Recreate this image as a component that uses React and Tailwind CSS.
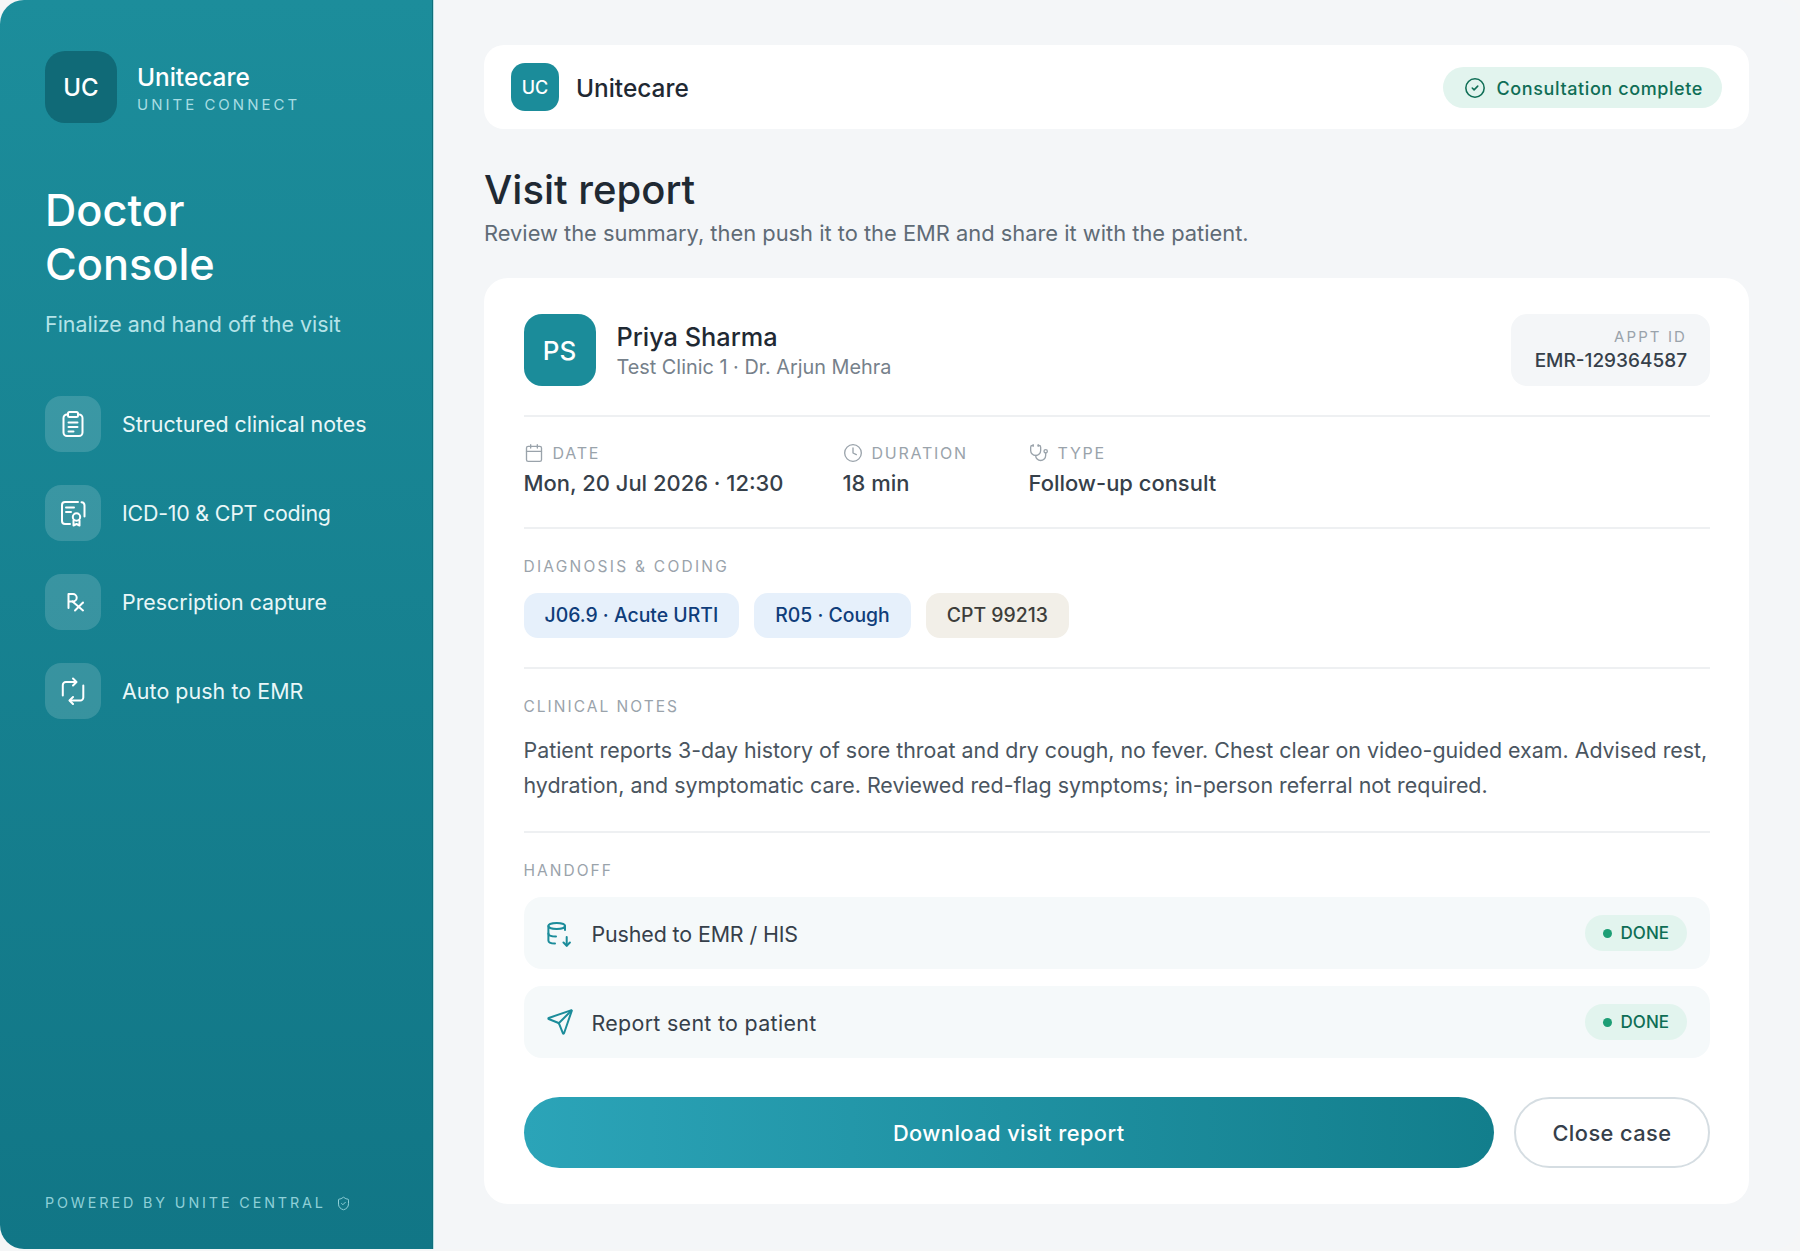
import React from 'react';
import { Calendar, Clock, Stethoscope, CircleCheck, Send, ShieldCheck } from 'lucide-react';

// sidebar icons, drawn on a 28px box to follow the picture
function Svg({ children, size = 28, className = '' }) {
  return (
    <svg width={size} height={size} viewBox="0 0 28 28" fill="none" stroke="currentColor" strokeWidth="2" strokeLinecap="round" strokeLinejoin="round" className={className}>
      {children}
    </svg>
  );
}

function NotesIcon() {
  return (
    <Svg>
      <path d="M9 4.5H8a3.5 3.5 0 0 0-3.5 3.5v14.5A3.5 3.5 0 0 0 8 26h12a3.5 3.5 0 0 0 3.5-3.5V8A3.5 3.5 0 0 0 20 4.5h-1" />
      <rect x="9" y="2" width="10" height="5" rx="1.5" />
      <path d="M9.5 12.5h9" />
      <path d="M9.5 17h9" />
      <path d="M9.5 21.5h5" />
    </Svg>
  );
}

function CodingIcon() {
  return (
    <Svg>
      <path d="M11 25H6a3 3 0 0 1-3-3V6a3 3 0 0 1 3-3h13" />
      <path d="M22.5 3.2a3.2 3.2 0 0 1 3 3.2v11" />
      <path d="M7 8.5h8" />
      <path d="M7 13h5" />
      <circle cx="17.5" cy="18" r="3.7" />
      <path d="M14.5 21.5v5l3-1.5 3 1.5v-5" />
    </Svg>
  );
}

function RxIcon() {
  return (
    <Svg>
      <path d="M9.5 20V6h4.5a3.7 3.7 0 0 1 0 7.4H9.5" />
      <path d="M13.5 13.4l10.5 9" />
      <path d="M24 14.5l-8 8" />
    </Svg>
  );
}

function PushIcon() {
  return (
    <Svg>
      <path d="M3.8 18.5V8a3 3 0 0 1 3-3H17" />
      <path d="M14 1.5L17.5 5 14 8.5" />
      <path d="M24.3 8.5V20.5a3 3 0 0 1-3 3H11" />
      <path d="M14 20l-3.5 3.5L14 27" />
    </Svg>
  );
}

function DbDownIcon({ className = '' }) {
  return (
    <Svg className={className}>
      <ellipse cx="10.7" cy="7" rx="8.3" ry="3" />
      <path d="M2.4 7v14.5c0 1.7 2.6 3 6.6 3" />
      <path d="M2.4 14.5c0 1.7 2.6 3 7.6 3" />
      <path d="M19 7v4" />
      <path d="M20.7 18v8.5" />
      <path d="M17.5 23.5l3.2 3.2 3.2-3.2" />
    </Svg>
  );
}

const features = [
  { icon: NotesIcon, label: 'Structured clinical notes', cls: '' },
  { icon: CodingIcon, label: 'ICD-10 & CPT coding', cls: 'tracking-[-0.01em]' },
  { icon: RxIcon, label: 'Prescription capture', cls: '' },
  { icon: PushIcon, label: 'Auto push to EMR', cls: 'tracking-[0.003em]' },
];

function Meta({ icon: Icon, label, value }) {
  return (
    <div>
      <div className="flex items-center gap-[9px] h-[20px] text-[16px] tracking-[0.11em] text-[#9aa3ab]">
        <Icon size={20} strokeWidth={1.6} />
        <span>{label}</span>
      </div>
      <div className="mt-[5px] text-[21.95px] leading-[30px] font-[450] text-[#36404a]">{value}</div>
    </div>
  );
}

function SectionLabel({ children, className = 'tracking-[0.13em]' }) {
  return <div className={'text-[15.5px] leading-[20px] text-[#9aa3ab] ' + className}>{children}</div>;
}

function Chip({ className, children }) {
  return <span className={'flex items-center h-[45px] px-[21px] pt-[1px] rounded-[14px] ' + className}>{children}</span>;
}

function HandoffRow({ children, label, labelClass }) {
  return (
    <div className="flex items-center h-[72px] pl-[22px] pr-[23px] rounded-[18px] bg-[#f5f9fa]">
      {children}
      <span className={'ml-[18px] pt-[2px] text-[21.4px] text-[#36404a] ' + labelClass}>{label}</span>
      <span className="ml-auto flex items-center gap-[9px] h-[36px] px-[18px] pt-[1px] rounded-full bg-[#e2f4ee] text-[17px] font-medium text-[#0f6e56]">
        <span className="w-[9px] h-[9px] rounded-full bg-[#1d9e75]" />
        DONE
      </span>
    </div>
  );
}

export default function App() {
  return (
    <div className="w-[1800px] h-[1251px] bg-[#f5f6f7] font-['Inter',sans-serif]">
      <div className="flex h-[1249px] w-[1799px] rounded-[24px] overflow-hidden bg-[#f4f6f8]">
        <aside className="flex flex-col w-[434px] shrink-0 pt-[51px] pl-[45px] pb-[36px] border-r border-[#b9dfe3] shadow-[inset_-1px_0_0_#0e6f7c] bg-gradient-to-b from-[#1c8d9b] to-[#117686] text-white">
          <div className="flex items-center gap-[20px]">
            <div className="flex items-center justify-center w-[72px] h-[72px] pt-[1px] rounded-[20px] bg-[#106a77] text-[24px] font-[450]">UC</div>
            <div className="pt-[2px]">
              <div className="text-[24.4px] leading-[30px] font-[450]">Unitecare</div>
              <div className="mt-[3px] text-[15px] leading-[20px] tracking-[0.2em] text-[#a8dde3]">UNITE CONNECT</div>
            </div>
          </div>
          <h1 className="mt-[60px] text-[43.3px] leading-[54px] font-[450]">Doctor<br />Console</h1>
          <p className="mt-[18px] text-[21.4px] leading-[30px] text-[#b5e3e8]">Finalize and hand off the visit</p>
          <div className="mt-[57px] flex flex-col gap-[33px]">
            {features.map((f) => (
              <div key={f.label} className="flex items-center gap-[21px]">
                <div className="flex items-center justify-center w-[56px] h-[56px] rounded-[16px] bg-white/15">
                  <f.icon />
                </div>
                <span className={'text-[21.4px] text-[#e9f7f8] ' + f.cls}>{f.label}</span>
              </div>
            ))}
          </div>
          <div className="mt-auto flex items-center gap-[10px] text-[14.35px] leading-[20px] tracking-[0.2em] text-[#8fd0d8]">
            POWERED BY UNITE CENTRAL
            <ShieldCheck size={15} strokeWidth={1.6} />
          </div>
        </aside>

        <main className="flex-1 pt-[45px] pl-[50px] pr-[50px]">
          <header className="flex items-center justify-between h-[84px] pl-[27px] pr-[27px] rounded-[20px] bg-white">
            <div className="flex items-center gap-[17px]">
              <div className="flex items-center justify-center w-[48px] h-[48px] pt-[1px] rounded-[14px] bg-[#1b8c9a] text-[18px] font-medium text-white">UC</div>
              <span className="pt-[2px] text-[24.4px] font-[450] text-[#1f2933]">Unitecare</span>
            </div>
            <div className="mt-[1px] flex items-center gap-[11px] h-[41px] pl-[21px] pr-[19px] rounded-full bg-[#e2f4ee] text-[18px] font-medium tracking-[0.6px] text-[#0f6e56]">
              <CircleCheck size={22} strokeWidth={1.7} />
              <span className="pt-[1px]">Consultation complete</span>
            </div>
          </header>

          <h2 className="mt-[37px] text-[40px] leading-[48px] font-[450] text-[#1f2933]">Visit report</h2>
          <p className="mt-[4px] text-[21.87px] leading-[30px] text-[#5f6b76]">Review the summary, then push it to the EMR and share it with the patient.</p>

          <section className="mt-[30px] pl-[39.5px] pr-[39px] pt-[36px] pb-[36px] rounded-[24px] bg-white">
            <div className="flex items-center justify-between pb-[29px] border-b-2 border-[#eef0f2]">
              <div className="flex items-center gap-[21px]">
                <div className="flex items-center justify-center w-[72px] h-[72px] rounded-[18px] bg-[#1b8c9a] text-[26px] font-medium text-white">PS</div>
                <div className="pt-[2px]">
                  <div className="text-[25.3px] leading-[32px] font-[450] text-[#1f2933]">Priya Sharma</div>
                  <div className="text-[19.85px] leading-[28px] text-[#76818b]">Test Clinic 1 · Dr. Arjun Mehra</div>
                </div>
              </div>
              <div className="flex flex-col justify-center items-end w-[199px] h-[72px] pr-[23px] rounded-[16px] bg-[#f4f6f8]">
                <div className="text-[15px] leading-[20px] tracking-[0.14em] text-[#9aa3ab]">APPT ID</div>
                <div className="text-[19px] leading-[27px] font-medium text-[#36404a]">EMR-129364587</div>
              </div>
            </div>

            <div className="flex pt-[26px] pb-[29px] border-b-2 border-[#eef0f2]">
              <div className="w-[319px]"><Meta icon={Calendar} label="DATE" value="Mon, 20 Jul 2026 · 12:30" /></div>
              <div className="w-[186px]"><Meta icon={Clock} label="DURATION" value="18 min" /></div>
              <Meta icon={Stethoscope} label="TYPE" value="Follow-up consult" />
            </div>

            <div className="pt-[28px] pb-[29px] border-b-2 border-[#eef0f2]">
              <SectionLabel className="tracking-[0.145em]">DIAGNOSIS &amp; CODING</SectionLabel>
              <div className="mt-[16px] flex gap-[15px] text-[19.4px] font-medium">
                <Chip className="bg-[#e6f0fb] text-[#0f3d7a]">J06.9 · Acute URTI</Chip>
                <Chip className="bg-[#e6f0fb] text-[#0f3d7a]">R05 · Cough</Chip>
                <Chip className="bg-[#f2efe8] text-[#3d3d3a]">CPT 99213</Chip>
              </div>
            </div>

            <div className="pt-[28px] pb-[29px] border-b-2 border-[#eef0f2]">
              <SectionLabel>CLINICAL NOTES</SectionLabel>
              <p className="mt-[16px] text-[21.4px] leading-[34.5px] text-[#4a5560]">
                Patient reports 3-day history of sore throat and dry cough, no fever. Chest clear on video-guided exam. Advised rest, hydration, and symptomatic care. Reviewed red-flag symptoms; in-person referral not required.
              </p>
            </div>

            <div className="pt-[28px]">
              <SectionLabel>HANDOFF</SectionLabel>
              <div className="mt-[16px] flex flex-col gap-[17px]">
                <HandoffRow label="Pushed to EMR / HIS" labelClass="tracking-[-0.005em]">
                  <DbDownIcon className="text-[#1b8c9a]" />
                </HandoffRow>
                <HandoffRow label="Report sent to patient" labelClass="tracking-[0.015em]">
                  <Send size={28} strokeWidth={1.7} className="text-[#1b8c9a]" />
                </HandoffRow>
              </div>
            </div>

            <div className="mt-[39px] flex gap-[20px]">
              <button className="flex-1 h-[71px] pt-[1px] rounded-full bg-gradient-to-r from-[#2ba4b8] to-[#127e8c] text-[21.8px] font-medium tracking-[0.02em] text-white">Download visit report</button>
              <button className="w-[196px] h-[71px] pt-[1px] rounded-full border-2 border-[#d5dde2] bg-white text-[21.8px] font-medium tracking-[0.02em] text-[#36404a]">Close case</button>
            </div>
          </section>
        </main>
      </div>
    </div>
  );
}
